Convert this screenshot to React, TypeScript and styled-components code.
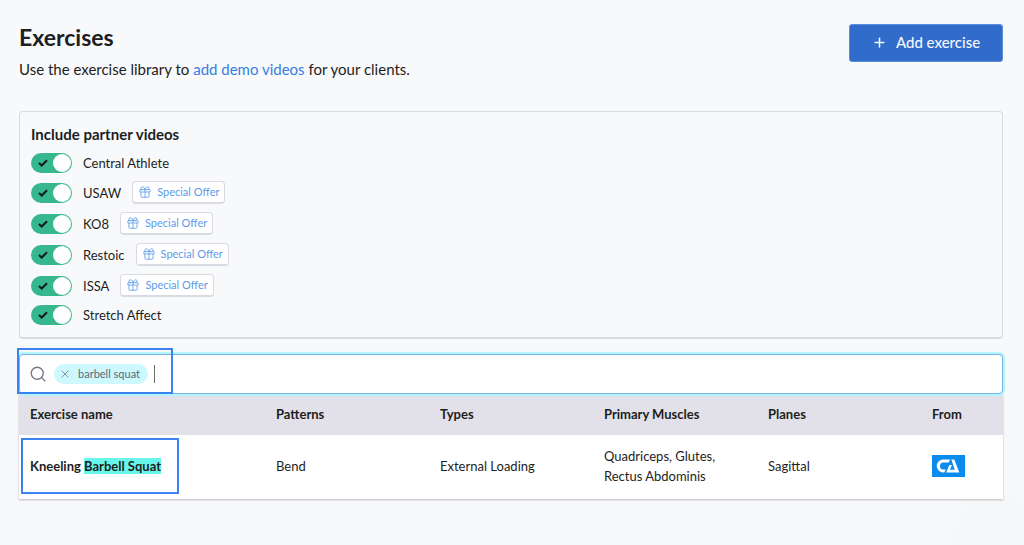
import React, { useState } from "react";
import styled, { createGlobalStyle } from "styled-components";
import { Gift, Plus, Search, X } from "lucide-react";

const GlobalStyle = createGlobalStyle`
  *, *::before, *::after { box-sizing: border-box; }
  html { min-height: 100%; background: #f8f9fb; }
  body {
    margin: 0;
    font-family: Lato, "Open Sans", sans-serif;
    font-size: 13px;
    line-height: 20px;
    color: #1d1e22;
  }
  button, input { font: inherit; color: inherit; }
`;

const Page = styled.main`
  min-height: 100vh;
  padding: 24px 21px 46px 19px;
  background: radial-gradient(circle at calc(100% - 24px) 100%, #f6f7f8 0, #f6f7f8 40px, #f8f9fb 70px);
`;

const Header = styled.header`
  display: flex;
  justify-content: space-between;
  align-items: flex-start;
  margin-bottom: 31px;
`;

const Title = styled.h1`
  margin: 0 0 8px;
  font-size: 23px;
  line-height: 26px;
  font-weight: 700;
`;

const Intro = styled.p`
  margin: 0;
  font-size: 15px;
  line-height: 22px;
  a {
    color: #3480e3;
    text-decoration: none;
  }
`;

const AddButton = styled.button`
  display: flex;
  align-items: center;
  justify-content: center;
  gap: 9px;
  width: 154px;
  height: 38px;
  padding: 0 0 2px;
  border: 1px solid #5a8de0;
  border-radius: 3px;
  background: #326ccb;
  color: #f4f8ff;
  font-size: 15px;
  font-weight: 500;
`;

const Panel = styled.fieldset`
  display: flex;
  flex-direction: column;
  gap: 8px;
  margin: 0 0 15px;
  padding: 11px 11px 12px;
  border: 1px solid #d9dae2;
  border-bottom-width: 2px;
  border-radius: 4px;
`;

const PanelTitle = styled.h2`
  margin: 0;
  font-size: 15px;
  line-height: 22px;
  font-weight: 700;
`;

const PartnerRow = styled.div`
  display: flex;
  align-items: center;
  gap: 11px;
`;

const PartnerLabel = styled.label`
  display: flex;
  align-items: center;
  gap: 11px;
  line-height: 18px;
`;

const Switch = styled.span`
  display: grid;
  align-items: center;
  svg {
    grid-area: 1 / 1;
    margin-left: 7px;
    pointer-events: none;
  }
`;

const SwitchInput = styled.input`
  grid-area: 1 / 1;
  appearance: none;
  display: flex;
  justify-content: flex-end;
  width: 41px;
  height: 20px;
  margin: 0;
  padding: 1px;
  border-radius: 10px;
  background: #37b78d;
  &::before {
    content: "";
    width: 18px;
    height: 18px;
    border-radius: 50%;
    background: #fff;
  }
  &:not(:checked) {
    justify-content: flex-start;
    background: #b9bcc6;
  }
`;

const OfferButton = styled.button`
  display: flex;
  align-items: center;
  gap: 5px;
  height: 23px;
  padding: 0 5px;
  border: 1px solid #d9dae2;
  border-bottom-width: 2px;
  border-radius: 4px;
  background: #fff;
  color: #5c9ae8;
  font-size: 11px;
  line-height: 16px;
`;

const SearchBar = styled.div`
  position: relative;
  z-index: 1;
  display: flex;
  align-items: center;
  height: 40px;
  padding: 0 9px 1px;
  border: 1px solid #75b3e8;
  border-radius: 4px;
  background: #fff;
  box-shadow: 0 0 0 2px #b5f3fd;
`;

const Tag = styled.span`
  display: flex;
  align-items: center;
  gap: 7px;
  height: 20px;
  margin-left: 7px;
  padding: 0 8px 0 5px;
  border-radius: 10px;
  background: #cdf8fe;
  color: #5b6a78;
  font-size: 11px;
`;

const TagRemove = styled.button`
  display: flex;
  padding: 0;
  border: 0;
  background: none;
  color: #7f95a3;
`;

const Caret = styled.span`
  width: 1px;
  height: 18px;
  margin-left: 6px;
  background: #6d6d72;
`;

const SearchInput = styled.input`
  flex: 1;
  min-width: 0;
  border: 0;
  outline: 0;
  background: none;
`;

const Callout = styled.span<{ $inset: string }>`
  position: absolute;
  inset: ${(p) => p.$inset};
  border: 2px solid #3a83f0;
  pointer-events: none;
`;

const SearchCallout = styled(Callout)`
  right: auto;
  width: 156px;
`;

const NameCallout = styled(Callout)`
  right: auto;
  width: 158px;
`;

const Table = styled.table`
  width: 100%;
  table-layout: fixed;
  border-collapse: collapse;
  background: #fff;
  box-shadow: 0 1px 2px rgba(40, 45, 55, 0.3);
`;

const Col = styled.col<{ $span: number }>`
  width: calc(100% * ${(p) => p.$span} / 12);
`;

const HeadCell = styled.th`
  height: 41px;
  padding: 0 11px 1px;
  background: #e2e1e9;
  font-weight: 700;
  text-align: left;
`;

const Cell = styled.td`
  position: relative;
  height: 64px;
  padding: 0 11px 2px;
`;

const NameCell = styled(Cell)`
  font-weight: 700;
  mark {
    background: #69f6ea;
    color: inherit;
  }
`;

const Logo = styled.svg`
  display: block;
  width: 33px;
  height: 22px;
`;

const partners = [
  { name: "Central Athlete", offer: false },
  { name: "USAW", offer: true },
  { name: "KO8", offer: true },
  { name: "Restoic", offer: true },
  { name: "ISSA", offer: true },
  { name: "Stretch Affect", offer: false },
];

const columns = [
  { label: "Exercise name", span: 3 },
  { label: "Patterns", span: 2 },
  { label: "Types", span: 2 },
  { label: "Primary Muscles", span: 2 },
  { label: "Planes", span: 2 },
  { label: "From", span: 1 },
];

function Partner({ name, offer }: { name: string; offer: boolean }) {
  return (
    <PartnerRow>
      <PartnerLabel>
        <Switch>
          <SwitchInput type="checkbox" role="switch" defaultChecked />
          <svg width="10" height="8" viewBox="0 0 10 8" fill="none" stroke="#101c1a" strokeWidth="2">
            <path d="M1 4 3.7 6.5 9 1.2" />
          </svg>
        </Switch>
        {name}
      </PartnerLabel>
      {offer && (
        <OfferButton type="button">
          <Gift size={14} strokeWidth={1.4} />
          Special Offer
        </OfferButton>
      )}
    </PartnerRow>
  );
}

function PartnerLogo() {
  return (
    <Logo viewBox="0 0 33 22" role="img" aria-label="Central Athlete">
      <rect width="33" height="22" fill="#0a8bee" />
      <path d="M18 4.5 16.8 7.4H11.6a3.6 3.6 0 0 0 0 7.2H13.6L12.4 17.5H11.2a6.5 6.5 0 0 1 0-13Z" fill="#fff" />
      <path
        d="M19.3 4.5H22.3L27.3 17.5H14.2L17.3 10H19.9L18 14.8H22.8Z"
        fill="#fff"
      />
    </Logo>
  );
}

export default function App() {
  const [query, setQuery] = useState("");
  return (
    <Page>
      <GlobalStyle />
      <Header>
        <div>
          <Title>Exercises</Title>
          <Intro>
            Use the exercise library to <a href="#demo">add demo videos</a> for your clients.
          </Intro>
        </div>
        <AddButton type="button">
          <Plus size={15} strokeWidth={2.4} />
          Add exercise
        </AddButton>
      </Header>

      <Panel aria-labelledby="partner-title">
        <PanelTitle id="partner-title">Include partner videos</PanelTitle>
        {partners.map((p) => (
          <Partner key={p.name} {...p} />
        ))}
      </Panel>

      <SearchBar>
        <Search size={18} strokeWidth={1.8} color="#777985" />
        <Tag>
          <TagRemove type="button" aria-label="Remove barbell squat">
            <X size={12} strokeWidth={2} />
          </TagRemove>
          barbell squat
        </Tag>
        <Caret />
        <SearchInput aria-label="Search exercises" value={query} onChange={(e) => setQuery(e.target.value)} />
        <SearchCallout $inset="-7px auto -1px -3px" />
      </SearchBar>

      <Table>
        <colgroup>
          {columns.map((c) => (
            <Col key={c.label} $span={c.span} />
          ))}
        </colgroup>
        <thead>
          <tr>
            {columns.map((c) => (
              <HeadCell key={c.label} scope="col">
                {c.label}
              </HeadCell>
            ))}
          </tr>
        </thead>
        <tbody>
          <tr>
            <NameCell>
              Kneeling <mark>Barbell Squat</mark>
              <NameCallout $inset="3px auto 5px 2px" />
            </NameCell>
            <Cell>Bend</Cell>
            <Cell>External Loading</Cell>
            <Cell>Quadriceps, Glutes, Rectus Abdominis</Cell>
            <Cell>Sagittal</Cell>
            <Cell>
              <PartnerLogo />
            </Cell>
          </tr>
        </tbody>
      </Table>
    </Page>
  );
}
